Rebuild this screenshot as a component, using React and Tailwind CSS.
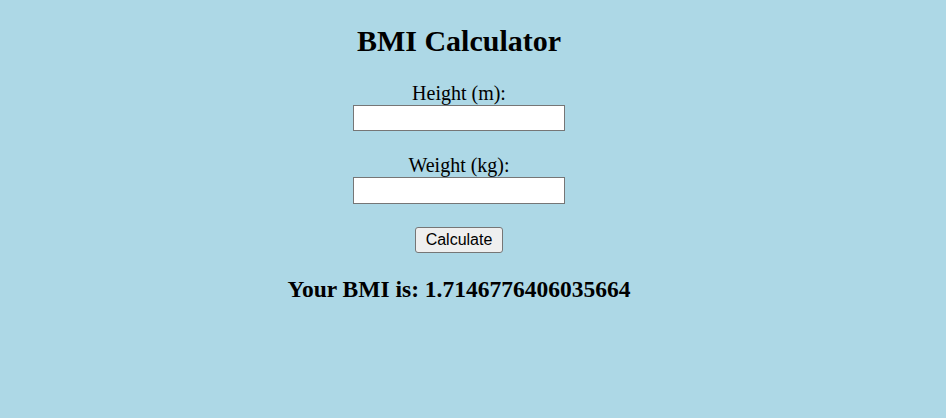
import React, { useState } from "react";

const App = () => {
  const [height, setHeight] = useState('');
  const [weight, setWeight] = useState('');
  const [bmi, setBmi] = useState('1.7146776406035664');

  const handleCalculate = () => {
    const h = parseFloat(height);
    const w = parseFloat(weight);
    if (h > 0 && w > 0) {
      setBmi(String(w / (h * h)));
    }
  };

  return (
    <div className="min-h-screen w-full bg-[#add8e6] text-black font-['Liberation_Serif',serif]">
      <div className="flex flex-col items-center pr-[28px] pt-[24px]">
        <h1 className="text-[30px] leading-[34px] font-bold">BMI Calculator</h1>

        <label className="mt-[24px] text-[20px] leading-[23px]" htmlFor="height">Height (m):</label>
        <input
          id="height"
          type="text"
          className="w-[212px] h-[26px] bg-white border border-[#767676] outline-none px-1"
          value={height}
          onChange={(e) => setHeight(e.target.value)}
        />

        <label className="mt-[23px] text-[20px] leading-[23px]" htmlFor="weight">Weight (kg):</label>
        <input
          id="weight"
          type="text"
          className="w-[212px] h-[27px] bg-white border border-[#767676] outline-none px-1"
          value={weight}
          onChange={(e) => setWeight(e.target.value)}
        />

        <button
          className="mt-[23px] w-[88px] h-[26px] bg-[#efefef] border border-[#767676] rounded-[3px] text-[16px] leading-[18px] font-['Liberation_Sans',sans-serif]"
          onClick={handleCalculate}>
          Calculate
        </button>

        <h2 className="mt-[23px] text-[23.5px] leading-[27px] font-bold">Your BMI is: {bmi}</h2>
      </div>
    </div>
  );
};

export default App;
